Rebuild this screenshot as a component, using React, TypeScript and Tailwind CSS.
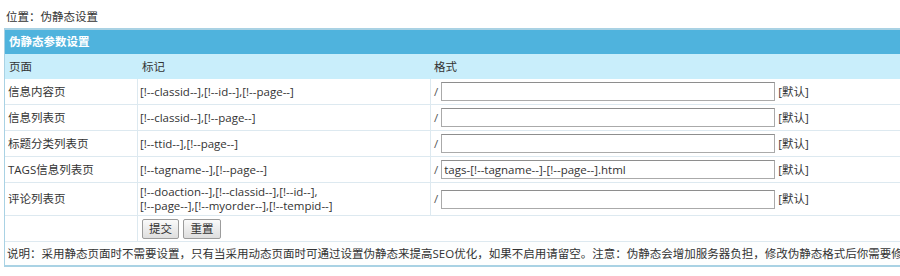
const rows = [
  { page: '信息内容页', mark: '[!--classid--],[!--id--],[!--page--]', value: '' },
  { page: '信息列表页', mark: '[!--classid--],[!--page--]', value: '' },
  { page: '标题分类列表页', mark: '[!--ttid--],[!--page--]', value: '' },
  { page: 'TAGS信息列表页', mark: '[!--tagname--],[!--page--]', value: 'tags-[!--tagname--]-[!--page--].html' },
];

const font = { fontFamily: '"Open Sans", "Noto Sans CJK SC", sans-serif' };

function FormatCell({ value, h }: { value: string; h: string }) {
  return (
    <td className="border-b border-[#dde9f0] p-0">
      <div className={`flex items-center pl-[3px] ${h}`}>
        <span className="text-[#555] mr-[3px]">/</span>
        <input
          readOnly
          value={value}
          className="w-[334px] h-[19px] border border-[#aaaaaa] border-t-[#8e8e8e] bg-white px-[2px] text-[11.5px] text-[#333] outline-none"
          style={font}
        />
        <span className="ml-[3px] text-[#333]">[默认]</span>
      </div>
    </td>
  );
}

export default function App() {
  return (
    <div className="w-[900px] h-[276px] overflow-hidden bg-white text-[11.5px] text-[#333]" style={font}>
      <div className="h-[28px] pl-[6px] pt-[8px] leading-[18px]">位置：伪静态设置</div>
      <table className="ml-[4px] w-[1000px] table-fixed border-separate border-spacing-0 border-t-2 border-b-2 border-l border-[#a9d2e4]">
        <colgroup>
          <col className="w-[133px]" />
          <col className="w-[293px]" />
          <col />
        </colgroup>
        <tbody>
          <tr>
            <td colSpan={3} className="p-0 bg-[#4fb3dd]">
              <div className="h-[24px] flex items-center pl-[4px] font-bold text-white">伪静态参数设置</div>
            </td>
          </tr>
          <tr>
            <td className="p-0 bg-[#c9eefb]">
              <div className="h-[25px] flex items-center pl-[4px]">页面</div>
            </td>
            <td className="p-0 bg-[#c9eefb]">
              <div className="h-[25px] flex items-center pl-[4px]">标记</div>
            </td>
            <td className="p-0 bg-[#c9eefb]">
              <div className="h-[25px] flex items-center pl-[3px]">格式</div>
            </td>
          </tr>
          {rows.map((r) => (
            <tr key={r.page}>
              <td className="p-0 border-b border-r border-[#dde9f0]">
                <div className="h-[25px] flex items-center pl-[3px]">{r.page}</div>
              </td>
              <td className="p-0 border-b border-r border-[#dde9f0]">
                <div className="h-[25px] flex items-center pl-[2px]">{r.mark}</div>
              </td>
              <FormatCell value={r.value} h="h-[25px]" />
            </tr>
          ))}
          <tr>
            <td className="p-0 border-b border-r border-[#dde9f0]">
              <div className="h-[32px] flex items-center pl-[3px]">评论列表页</div>
            </td>
            <td className="p-0 border-b border-r border-[#dde9f0]">
              <div className="h-[32px] flex flex-col justify-center pl-[2px] leading-[14px]">
                <span>[!--doaction--],[!--classid--],[!--id--],</span>
                <span>[!--page--],[!--myorder--],[!--tempid--]</span>
              </div>
            </td>
            <FormatCell value="" h="h-[32px]" />
          </tr>
          <tr>
            <td className="p-0 border-b border-r border-[#dde9f0]">
              <div className="h-[25px]"></div>
            </td>
            <td colSpan={2} className="p-0 border-b border-[#dde9f0]">
              <div className="h-[25px] flex items-center gap-[4px] pl-[4px]">
                <button className="h-[20px] w-[37px] border border-[#9c9c9c] rounded-[2px] bg-gradient-to-b from-[#fafafa] to-[#dedede] text-[11.5px] text-[#333]" style={font}>
                  提交
                </button>
                <button className="h-[20px] w-[38px] border border-[#9c9c9c] rounded-[2px] bg-gradient-to-b from-[#fafafa] to-[#dedede] text-[11.5px] text-[#333]" style={font}>
                  重置
                </button>
              </div>
            </td>
          </tr>
          <tr>
            <td colSpan={3} className="p-0 bg-[#fdfefe]">
              <div className="h-[23px] flex items-center pl-[2px] whitespace-nowrap">
                说明：采用静态页面时不需要设置，只有当采用动态页面时可通过设置伪静态来提高SEO优化，如果不启用请留空。注意：伪静态会增加服务器负担，修改伪静态格式后你需要修改服务器的Rewrite规则设置。
              </div>
            </td>
          </tr>
        </tbody>
      </table>
    </div>
  );
}
